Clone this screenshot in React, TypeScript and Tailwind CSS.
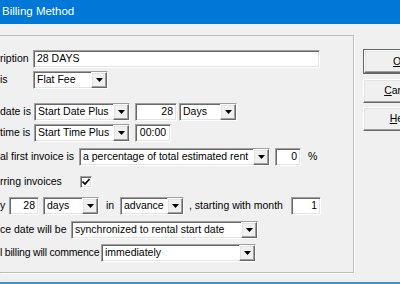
const SUNKEN =
  "bg-white border border-[#a0a0a0] border-b-white border-r-white shadow-[inset_1px_1px_0_#696969,inset_-1px_-1px_0_#e3e3e3]";
const RAISED =
  "bg-[#f0f0f0] border border-white border-b-[#696969] border-r-[#696969] shadow-[inset_-1px_-1px_0_#a0a0a0,inset_1px_1px_0_#e3e3e3]";

function Arrow() {
  return (
    <svg width="7" height="4" viewBox="0 0 7 4">
      <path d="M0 0h7L3.5 4z" fill="#000" />
    </svg>
  );
}

function Select({ value, w }: { value: string; w: string }) {
  return (
    <div className={`${SUNKEN} ${w} h-[18px] flex items-stretch shrink-0`}>
      <div className="flex-1 pl-[3px] flex items-center whitespace-nowrap overflow-hidden">{value}</div>
      <div className={`${RAISED} w-[16px] flex items-center justify-center`}>
        <Arrow />
      </div>
    </div>
  );
}

function Input({ value, w, align = "text-left" }: { value: string; w: string; align?: string }) {
  return (
    <div className={`${SUNKEN} ${w} ${align} h-[18px] px-[3px] flex items-center shrink-0 whitespace-nowrap`}>
      <span className="flex-1">{value}</span>
    </div>
  );
}

function Row({ children, mt }: { children: React.ReactNode; mt: string }) {
  return <div className={`flex items-center h-[18px] ${mt}`}>{children}</div>;
}

function Label({ text, w, extra = "" }: { text: string; w: string; extra?: string }) {
  return <span className={`${w} ${extra} shrink-0 whitespace-nowrap`}>{text}</span>;
}

function DlgButton({ label, def, mt }: { label: string; def?: boolean; mt: string }) {
  return (
    <div className={`${mt} ${def ? "border border-[#646464]" : ""} w-[75px]`}>
      <div className={`${RAISED} ${def ? "h-[23px]" : "h-[24px]"} flex items-center justify-center`}>
        <span>
          <span className="underline">{label[0]}</span>
          {label.slice(1)}
        </span>
      </div>
    </div>
  );
}

export default function App() {
  return (
    <div className="w-[400px] h-[284px] overflow-hidden bg-[#f0f0f0] flex flex-col font-['Liberation_Sans',Arial,sans-serif] text-[10.5px] text-black">
      <div className="h-[24px] bg-[#0078d7] text-white text-[11.5px] pl-[2px] flex items-center shrink-0">
        Billing Method
      </div>

      <div className="flex flex-1 pt-[11px]">
        <div className="w-[354px] h-[238px] shrink-0 border-t border-r border-b border-[#bcbcbc] shadow-[1px_1px_0_white] pt-[14px]">
          <Row mt="">
            <Label text="ription" w="w-[33px]" />
            <Input value="28 DAYS" w="w-[287px]" />
          </Row>
          <Row mt="mt-[3px]">
            <Label text="is" w="w-[33px]" />
            <Select value="Flat Fee" w="w-[75px]" />
          </Row>
          <Row mt="mt-[14px]">
            <Label text="date is" w="w-[34px]" />
            <Select value="Start Date Plus" w="w-[96px]" />
            <div className="ml-[5px]">
              <Input value="28" w="w-[42px]" align="text-right" />
            </div>
            <div className="ml-[2px]">
              <Select value="Days" w="w-[58px]" />
            </div>
          </Row>
          <Row mt="mt-[3px]">
            <Label text="time is" w="w-[34px]" />
            <Select value="Start Time Plus" w="w-[96px]" />
            <div className="ml-[5px]">
              <Input value="00:00" w="w-[36px]" align="text-center" />
            </div>
          </Row>
          <Row mt="mt-[6px]">
            <Label text="al first invoice is" w="w-[79px]" />
            <Select value="a percentage of total estimated rent" w="w-[191px]" />
            <div className="ml-[5px]">
              <Input value="0" w="w-[26px]" align="text-right" />
            </div>
            <span className="ml-[7px]">%</span>
          </Row>
          <Row mt="mt-[7px]">
            <Label text="rring invoices" w="w-[80px]" />
            <div className={`${SUNKEN} w-[12px] h-[12px] flex items-center justify-center`}>
              <svg width="8" height="8" viewBox="0 0 8 8">
                <path d="M0.5 3.5l2.5 2.5 4.5-5" stroke="#000" strokeWidth="1.6" fill="none" />
              </svg>
            </div>
          </Row>
          <Row mt="mt-[6px]">
            <Label text="y" w="w-[9px]" />
            <Input value="28" w="w-[30px]" align="text-right" />
            <div className="ml-[4px]">
              <Select value="days" w="w-[56px]" />
            </div>
            <span className="ml-[7px] w-[14px]">in</span>
            <Select value="advance" w="w-[64px]" />
            <span className="ml-[5px] w-[102px] whitespace-nowrap">, starting with month</span>
            <Input value="1" w="w-[30px]" align="text-right" />
          </Row>
          <Row mt="mt-[6px]">
            <Label text="ce date will be" w="w-[71px]" />
            <Select value="synchronized to rental start date" w="w-[187px]" />
          </Row>
          <Row mt="mt-[5px]">
            <Label text="l billing will commence" w="w-[101px]" extra="tracking-[-0.2px]" />
            <Select value="immediately" w="w-[155px]" />
          </Row>
        </div>

        <div className="ml-[9px] pt-[14px] flex flex-col shrink-0">
          <DlgButton label="OK" def mt="" />
          <DlgButton label="Cancel" mt="mt-[5px]" />
          <DlgButton label="Help" mt="mt-[4px]" />
        </div>
      </div>

      <div className="h-[2px] bg-[#3f92c4] shrink-0" />
    </div>
  );
}
